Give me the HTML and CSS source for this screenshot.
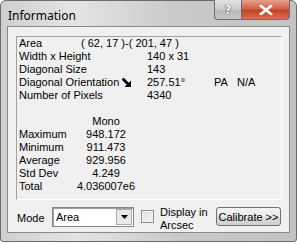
FILE: index.html
```html
<!DOCTYPE html>
<html lang="en">
<head>
    <meta charset="UTF-8">
    <title>Information</title>
    <link rel="stylesheet" href="styles.css">
</head>
<body>
    <div class="window">
        <div class="titlebar">
            <span class="title">Information</span>
            <div class="caption-buttons">
                <button class="cap-help">?</button>
                <button class="cap-close">
                    <svg width="14" height="10" viewBox="0 0 14 10"><path d="M2 1 L12 9 M12 1 L2 9" stroke="#fff" stroke-width="2.6" stroke-linecap="square"/></svg>
                </button>
            </div>
        </div>

        <div class="client">
            <div class="panel">
                <div class="geom">
                    <span>Area</span>
                    <span class="coords">( 62, 17 )-( 201, 47 )</span>

                    <span class="wide">Width x Height</span>
                    <span>140 x 31</span>
                    <span></span>

                    <span class="wide">Diagonal Size</span>
                    <span>143</span>
                    <span></span>

                    <span class="wide">Diagonal Orientation
                        <svg class="arrow" width="9" height="9" viewBox="0 0 9 9"><path d="M0.5 0.5 L6 6" stroke="#000" stroke-width="2.8"/><polygon points="9,2.5 9,9 2.5,9" fill="#000"/></svg>
                    </span>
                    <span>257.51°</span>
                    <span>PA&nbsp;&nbsp;&nbsp;N/A</span>

                    <span class="wide">Number of Pixels</span>
                    <span>4340</span>
                    <span></span>
                </div>

                <div class="stats">
                    <span></span><span class="val">Mono</span>
                    <span>Maximum</span><span class="val">948.172</span>
                    <span>Minimum</span><span class="val">911.473</span>
                    <span>Average</span><span class="val">929.956</span>
                    <span>Std Dev</span><span class="val">4.249</span>
                    <span>Total</span><span class="val">4.036007e6</span>
                </div>
            </div>

            <div class="controls">
                <label class="mode-label">Mode</label>
                <div class="combo">
                    <span class="combo-text">Area</span>
                    <span class="combo-btn">
                        <svg width="7" height="4" viewBox="0 0 7 4"><polygon points="0,0 7,0 3.5,4" fill="#000"/></svg>
                    </span>
                </div>
                <span class="check"></span>
                <span class="check-label">Display in<br>Arcsec</span>
                <button class="calibrate">Calibrate &gt;&gt;</button>
            </div>
        </div>
    </div>
</body>
</html>
```

FILE: styles.css
```css
body {
    margin: 0;
    width: 297px;
    height: 244px;
    overflow: hidden;
    background: #fff;
    font-family: "Liberation Sans", Arial, sans-serif;
    font-size: 11px;
}

.window {
    box-sizing: border-box;
    width: 297px;
    height: 242px;
    border: 1px solid #6b6b6b;
    border-radius: 6px 6px 3px 3px;
    background: linear-gradient(90deg, #cfcfcf 0%, #e4e4e4 25%, #c9c9c9 60%, #c2c2c2 100%);
    padding: 0 6px 8px 6px;
    display: flex;
    flex-direction: column;
}

.titlebar {
    height: 28px;
    display: flex;
    align-items: flex-start;
    justify-content: space-between;
}

.title {
    font-family: "Noto Sans", sans-serif;
    font-size: 12px;
    color: #000;
    padding-top: 6px;
    padding-left: 1px;
}

.caption-buttons {
    display: flex;
    margin-top: -1px;
}

.caption-buttons button {
    height: 20px;
    border: 1px solid #6e6e6e;
    border-top: none;
    padding: 0;
    display: flex;
    align-items: center;
    justify-content: center;
}

.cap-help {
    width: 27px;
    border-radius: 0 0 0 4px;
    background: linear-gradient(#e2e2e2, #c9c9c9 50%, #b8b8b8 51%, #c8c8c8);
    font-family: "DejaVu Sans", sans-serif;
    font-weight: bold;
    font-size: 12px;
    color: #fff;
    text-shadow: 0 0 1px #333, 0 0 1px #333;
    border-right: none !important;
}

.cap-close {
    width: 49px;
    border-radius: 0 0 4px 0;
    background: linear-gradient(#e8a08c, #d1624a 45%, #c2432b 55%, #d9704f);
}

.client {
    flex: 1;
    background: #f0f0f0;
    border: 1px solid #8a8a8a;
    padding: 9px 7px 0 8px;
    display: flex;
    flex-direction: column;
}

.panel {
    height: 162px;
    border: 1px solid;
    border-color: #a0a0a0 #fff #fff #a0a0a0;
    padding: 0 0 0 2px;
    line-height: 13px;
    color: #000;
}

.geom {
    display: grid;
    grid-template-columns: 62px 66px 67px auto;
}

.geom .coords {
    grid-column: 2 / span 3;
}

.geom .wide {
    grid-column: 1 / span 2;
    white-space: nowrap;
}

.arrow {
    margin-left: 0;
    vertical-align: -1px;
}

.stats {
    margin-top: 13px;
    display: grid;
    grid-template-columns: 56px 62px;
}

.stats .val {
    text-align: center;
}

.controls {
    margin-top: 7px;
    display: flex;
    align-items: flex-start;
}

.mode-label {
    padding-top: 5px;
    padding-left: 1px;
    width: 35px;
}

.combo {
    box-sizing: border-box;
    width: 82px;
    height: 20px;
    border: 1px solid #828790;
    box-shadow: inset 1px 1px 0 #a0a0a0;
    background: #fff;
    display: flex;
    align-items: center;
    justify-content: space-between;
}

.combo-text {
    padding-left: 3px;
}

.combo-btn {
    box-sizing: border-box;
    width: 16px;
    height: 16px;
    margin-right: 1px;
    background: #e8e8e8;
    border: 1px solid #acacac;
    display: flex;
    align-items: center;
    justify-content: center;
}

.check {
    box-sizing: border-box;
    width: 13px;
    height: 13px;
    margin: 3px 0 0 7px;
    border: 1px solid #8e8f8f;
    background: linear-gradient(135deg, #dcdcdc, #f8f8f8);
    box-shadow: inset 0 0 0 1px #f4f4f4;
}

.check-label {
    margin-left: 6px;
    line-height: 13px;
    margin-top: -1px;
}

.calibrate {
    margin-left: auto;
    margin-right: 1px;
    width: 65px;
    height: 19px;
    padding: 0;
    font-family: "Liberation Sans", Arial, sans-serif;
    font-size: 11px;
    color: #000;
    border: 1px solid #707070;
    border-radius: 3px;
    background: linear-gradient(#f2f2f2, #ebebeb 50%, #dddddd 51%, #cfcfcf);
}
```
